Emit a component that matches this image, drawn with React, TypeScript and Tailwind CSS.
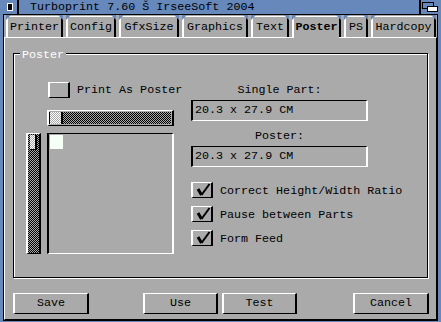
import React from 'react';

const dark = "bg-[image:repeating-conic-gradient(#000000_0_25%,#aaaaaa_0_50%)] bg-[length:2px_2px]";
const light = "bg-[image:repeating-conic-gradient(#ffffff_0_25%,#aaaaaa_0_50%)] bg-[length:2px_2px]";
const raised = "border-t border-b border-l-2 border-r-2 border-t-white border-l-white border-b-black border-r-black";
const sunken = "border-t border-b border-l-2 border-r-2 border-t-black border-l-black border-b-white border-r-white";

const tabs = [
  { label: 'Printer', w: 'w-[57px]', ml: 'ml-[2px]' },
  { label: 'Config', w: 'w-[50px]', ml: 'ml-[3px]' },
  { label: 'GfxSize', w: 'w-[60px]', ml: 'ml-[3px]' },
  { label: 'Graphics', w: 'w-[66px]', ml: 'ml-[3px]' },
  { label: 'Text', w: 'w-[38px]', ml: 'ml-[3px]' },
  { label: 'Poster', w: 'w-[49px]', ml: 'ml-[3px]', active: true },
  { label: 'PS', w: 'w-[24px]', ml: 'ml-[3px]' },
  { label: 'Hardcopy', w: 'w-[65px]', ml: 'ml-[3px]' },
];

function Tab({ label, w, ml, active }: { label: string; w: string; ml: string; active?: boolean }) {
  return (
    <div
      className={`relative h-[21px] ${w} ${ml} border-t border-l-2 border-r-2 border-t-white border-l-white border-r-black flex items-center justify-center ${active ? 'font-bold z-10' : ''}`}
    >
      <svg className="absolute -top-[2px] -left-[2px]" width="5" height="5">
        <polygon points="0,0 5,0 0,5" fill="#6688bb" />
      </svg>
      <svg className="absolute -top-[2px] -right-[2px]" width="5" height="5">
        <polygon points="0,0 5,0 5,5" fill="#6688bb" />
      </svg>
      <span>{label}</span>
      {active && <div className="absolute -bottom-[1px] left-0 right-0 h-[1px] bg-[#aaaaaa]" />}
    </div>
  );
}

function Check({ checked }: { checked?: boolean }) {
  return (
    <div className={`w-[22px] h-[16px] ${raised} shrink-0 relative`}>
      {checked && (
        <svg className="absolute left-0 top-0" width="18" height="14" viewBox="0 0 18 14">
          <path d="M5 6 L8.5 12" stroke="#000" strokeWidth="3" fill="none" />
          <path d="M8.5 12 L16.5 1" stroke="#000" strokeWidth="2" fill="none" />
        </svg>
      )}
    </div>
  );
}

export default function App() {
  return (
    <div className="w-[441px] h-[322px] bg-[#6688bb] flex flex-col font-['Liberation_Mono',monospace] text-[11.7px] leading-[13px] text-black overflow-hidden">
      {/* Title bar */}
      <div className="h-[14px] flex items-center shrink-0">
        <div className="w-[19px] h-full border-r-2 border-black flex items-center pl-[7px]">
          <div className="w-[6px] h-[8px] border border-white bg-black" />
        </div>
        <div className="flex-1 pl-[11px] leading-[14px] whitespace-pre">Turboprint 7.60 Š IrseeSoft 2004</div>
        <div className="w-[22px] h-full border-l-2 border-black relative">
          <svg className="absolute left-0 top-0" width="20" height="14">
            <rect x="1.5" y="2.5" width="11" height="6" fill="#6688bb" stroke="#000" />
            <rect x="6.5" y="6.5" width="10" height="5" fill="#fff" stroke="#000" />
          </svg>
        </div>
      </div>

      {/* Body */}
      <div className="flex-1 mx-[3px] mb-[1px] border border-black bg-[#aaaaaa] flex flex-col">
        {/* Tabs */}
        <div className="h-[22px] pt-[1px] flex shrink-0">
          {tabs.map((t) => (
            <Tab key={t.label} {...t} />
          ))}
        </div>

        {/* Page */}
        <div className="flex-1 flex flex-col border border-t-white border-l-white border-r-black border-b-black">
          {/* Group box */}
          <div className="relative ml-[8px] mt-[15px] w-[415px] h-[225px] border border-black shadow-[inset_1px_1px_0_#ffffff,1px_1px_0_#ffffff] flex">
            <div className="absolute -top-[5px] left-[6px] px-[2px] bg-[#aaaaaa] text-white">Poster</div>

            {/* Left column */}
            <div className="flex flex-col pl-[12px] pt-[28px] w-[160px]">
              <div className="flex items-center ml-[22px] h-[16px]">
                <Check />
                <span className="ml-[7px] whitespace-pre">Print As Poster</span>
              </div>
              <div className={`mt-[12px] ml-[21px] w-[127px] h-[16px] ${raised} flex p-[1px] pl-0`}>
                <div className={`w-[14px] h-full ${light} border-l border-black border-r-2`} />
                <div className={`flex-1 h-full ${dark}`} />
              </div>
              <div className="flex mt-[7px]">
                <div className={`w-[15px] h-[121px] ${raised} p-[1px] pl-[1px] ${dark} flex flex-col`}>
                  <div className={`h-[15px] w-[7px] ml-[1px] ${light} border-r-2 border-b border-black`} />
                </div>
                <div className={`ml-[6px] w-[127px] h-[121px] ${sunken} pl-[1px] pt-[1px]`}>
                  <div className="w-[13px] h-[14px] bg-[#f6fff6]" />
                </div>
              </div>
            </div>

            {/* Right column */}
            <div className="flex flex-col ml-[17px] pt-[30px] w-[177px]">
              <div className="text-center">Single Part:</div>
              <div className={`mt-[3px] h-[21px] ${sunken} pl-[2px] flex items-center whitespace-pre`}>20.3 x 27.9 CM</div>
              <div className="text-center mt-[9px]">Poster:</div>
              <div className={`mt-[3px] h-[21px] ${sunken} pl-[2px] flex items-center whitespace-pre`}>20.3 x 27.9 CM</div>
              <div className="mt-[15px] flex flex-col gap-[8px]">
                {['Correct Height/Width Ratio', 'Pause between Parts', 'Form Feed'].map((l) => (
                  <div key={l} className="flex items-center h-[16px]">
                    <Check checked />
                    <span className="ml-[7px] whitespace-pre pt-[2px]">{l}</span>
                  </div>
                ))}
              </div>
            </div>
          </div>

          {/* Buttons */}
          <div className="flex mt-[15px] ml-[8px]">
            <div className={`h-[21px] w-[76px] ${raised} flex items-center justify-center`}>Save</div>
            <div className={`h-[21px] w-[75px] ml-[54px] ${raised} flex items-center justify-center`}>Use</div>
            <div className={`h-[21px] w-[75px] ml-[4px] ${raised} flex items-center justify-center`}>Test</div>
            <div className={`h-[21px] w-[76px] ml-[56px] ${raised} flex items-center justify-center`}>Cancel</div>
          </div>
        </div>
      </div>
    </div>
  );
}
